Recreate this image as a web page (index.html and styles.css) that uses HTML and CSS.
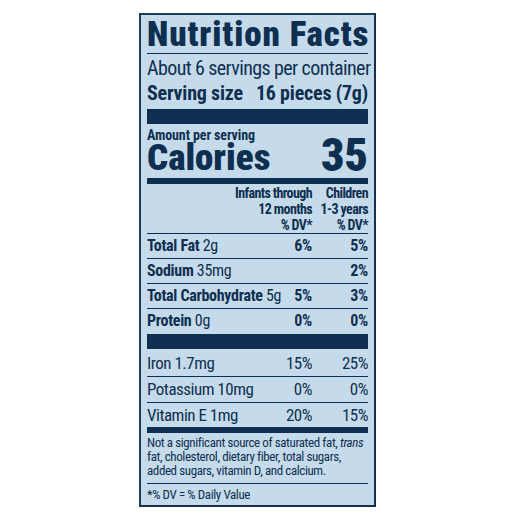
FILE: index.html
```html
<!DOCTYPE html>
<html lang="en">
<head>
    <meta charset="UTF-8">
    <meta name="viewport" content="width=device-width, initial-scale=1.0">
    <title>Nutrition Facts</title>
    <link rel="stylesheet" href="styles.css">
</head>
<body>

<div class="label">
    <h1 class="title">Nutrition Facts</h1>
    <p class="servings">About 6 servings per container</p>
    <div class="serving-size">
        <span>Serving size</span>
        <span>16 pieces (7g)</span>
    </div>
    <div class="bar thick"></div>

    <div class="calories">
        <div class="calories-left">
            <div class="amount">Amount per serving</div>
            <div class="calories-name">Calories</div>
        </div>
        <div class="calories-value">35</div>
    </div>
    <div class="bar medium"></div>

    <div class="row head">
        <span></span>
        <span>Infants through<br>12 months<br>% DV*</span>
        <span>Children<br>1-3 years<br>% DV*</span>
    </div>

    <div class="row nutrient">
        <span><b>Total Fat</b> 2g</span>
        <b>6%</b>
        <b>5%</b>
    </div>
    <div class="row nutrient">
        <span><b>Sodium</b> 35mg</span>
        <b></b>
        <b>2%</b>
    </div>
    <div class="row nutrient">
        <span><b>Total Carbohydrate</b> 5g</span>
        <b>5%</b>
        <b>3%</b>
    </div>
    <div class="row nutrient last">
        <span><b>Protein</b> 0g</span>
        <b>0%</b>
        <b>0%</b>
    </div>
    <div class="bar thick"></div>

    <div class="row vitamin first">
        <span>Iron 1.7mg</span>
        <span>15%</span>
        <span>25%</span>
    </div>
    <div class="row vitamin">
        <span>Potassium 10mg</span>
        <span>0%</span>
        <span>0%</span>
    </div>
    <div class="row vitamin last">
        <span>Vitamin E 1mg</span>
        <span>20%</span>
        <span>15%</span>
    </div>
    <div class="bar medium"></div>

    <p class="note">Not a significant source of saturated fat, <i>trans</i><br>fat, cholesterol, dietary fiber, total sugars,<br>added sugars, vitamin D, and calcium.</p>
    <p class="footnote">*% DV = % Daily Value</p>
</div>

</body>
</html>
```
FILE: styles.css
```css
* {
    box-sizing: border-box;
}
body {
    margin: 0;
    background: #fff;
    font-family: "Roboto Condensed", "Open Sans", sans-serif;
    color: #0f2f50;
}
.label {
    width: 237px;
    margin: 13px 0 0 139px;
    padding: 2px 6px 0;
    background: #c5dbec;
    border: 2px solid #1f3c5a;
    border-right-color: #16304b;
    border-bottom-color: #16304b;
}
.title {
    margin: 0;
    font-size: 35px;
    font-weight: 900;
    line-height: 36px;
    letter-spacing: 0.9px;
    white-space: nowrap;
    border-bottom: 1px solid #0f2f50;
}
.servings {
    margin: 3px 0 0;
    font-size: 20px;
    line-height: 22px;
    letter-spacing: -0.6px;
    white-space: nowrap;
}
.serving-size {
    display: flex;
    justify-content: space-between;
    margin-top: 3px;
    font-size: 20px;
    font-weight: bold;
    line-height: 22px;
    letter-spacing: -0.2px;
}
.bar {
    background: #0f2f50;
}
.bar.thick {
    height: 15px;
    margin-top: 5px;
}
.bar.medium {
    height: 6px;
    margin-top: 4px;
}
.calories {
    display: flex;
    justify-content: space-between;
    align-items: flex-end;
    margin-top: 4px;
    font-weight: bold;
}
.amount {
    font-size: 14px;
    line-height: 14px;
    letter-spacing: -0.1px;
}
.calories-name {
    font-size: 37px;
    font-weight: 900;
    line-height: 32px;
}
.calories-value {
    font-size: 46px;
    font-weight: 900;
    line-height: 38px;
}
.row {
    display: grid;
    grid-template-columns: 1fr auto 56px;
    white-space: nowrap;
    border-bottom: 1px solid #0f2f50;
}
.row > :nth-child(2),
.row > :nth-child(3) {
    text-align: right;
}
.row.head {
    margin-top: 1px;
    font-size: 14px;
    font-weight: bold;
    line-height: 16px;
    letter-spacing: -0.6px;
}
.row.nutrient {
    grid-template-columns: 1fr 30px 56px;
    font-size: 16px;
    line-height: 24px;
    letter-spacing: -0.3px;
}
.row.last {
    border-bottom: none;
}
.row.nutrient.last + .bar.thick {
    margin-top: 1px;
}
.row.vitamin {
    grid-template-columns: 1fr 40px 56px;
    font-size: 17px;
    line-height: 25px;
    letter-spacing: -0.5px;
}
.row.vitamin.first {
    margin-top: 2px;
}
.row.vitamin.last {
    line-height: 24px;
}
.row.vitamin.last + .bar.medium {
    margin-top: 0;
}
.note {
    margin: 3px 0 0;
    padding-bottom: 5px;
    font-size: 13px;
    line-height: 14px;
    letter-spacing: -0.4px;
    white-space: nowrap;
    border-bottom: 1px solid #0f2f50;
}
.footnote {
    margin: 0;
    padding: 4px 0 3px;
    font-size: 13px;
    line-height: 14px;
    letter-spacing: -0.4px;
}
```
